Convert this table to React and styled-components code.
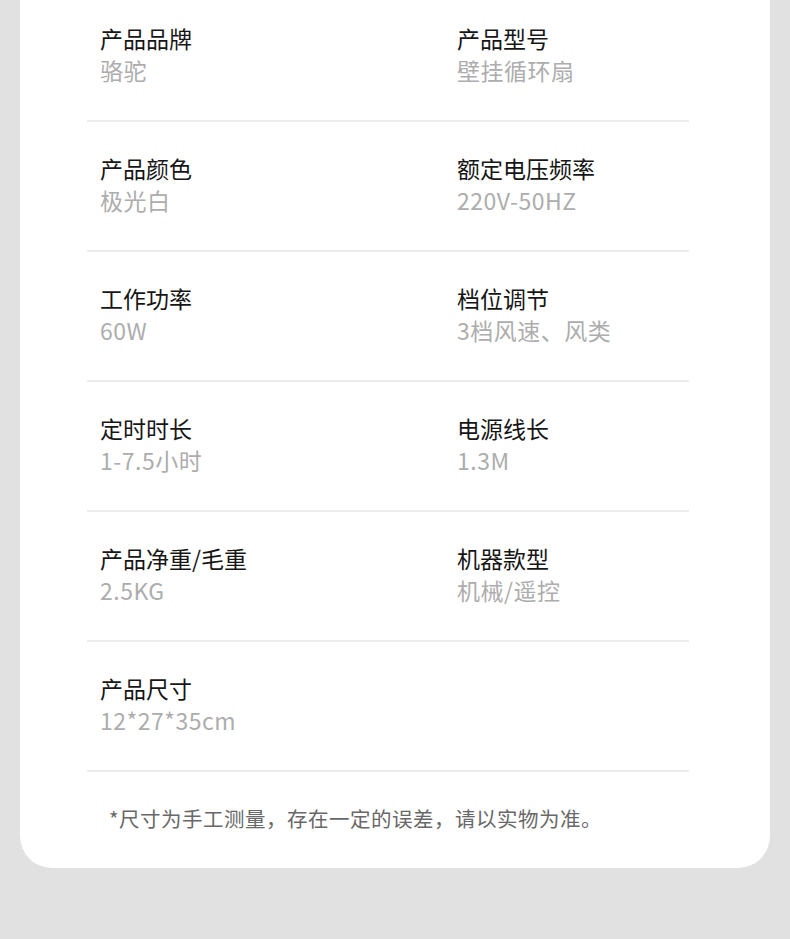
import React from "react";
import styled, { createGlobalStyle } from "styled-components";

const Global = createGlobalStyle`
  html, body { margin: 0; padding: 0; background: #e1e1e1; }
  body { font-family: "Noto Sans CJK SC", "Noto Sans", sans-serif; }
`;

const Page = styled.div`
  padding: 0 20px 71px;
`;

const Card = styled.div`
  background: #ffffff;
  border-radius: 0 0 32px 32px;
  padding: 0 81px 0 67px;
`;

const Row = styled.div`
  display: grid;
  grid-template-columns: 357px 1fr;
  padding: 30px 0 34px 13px;
  border-bottom: 2px solid #ececec;
  &:first-child { padding-top: 22px; }
`;

const Cell = styled.div`
  display: flex;
  flex-direction: column;
`;

const Label = styled.div`
  font-size: 23px;
  line-height: 32px;
  color: #161616;
`;

const Value = styled.div`
  font-size: 23px;
  line-height: 32px;
  color: #adadad;
  letter-spacing: 0.5px;
`;

const Note = styled.div`
  padding: 32px 0 36px 22px;
  font-size: 20.5px;
  line-height: 28px;
  letter-spacing: 0.5px;
  color: #686868;
`;

const rows = [
  [["产品品牌", "骆驼"], ["产品型号", "壁挂循环扇"]],
  [["产品颜色", "极光白"], ["额定电压频率", "220V-50HZ"]],
  [["工作功率", "60W"], ["档位调节", "3档风速、风类"]],
  [["定时时长", "1-7.5小时"], ["电源线长", "1.3M"]],
  [["产品净重/毛重", "2.5KG"], ["机器款型", "机械/遥控"]],
  [["产品尺寸", "12*27*35cm"]],
];

export default function App() {
  return (
    <>
      <Global />
      <Page>
        <Card>
          {rows.map((r, i) => (
            <Row key={i}>
              {r.map(([l, v]) => (
                <Cell key={l}>
                  <Label>{l}</Label>
                  <Value>{v}</Value>
                </Cell>
              ))}
            </Row>
          ))}
          <Note>*尺寸为手工测量，存在一定的误差，请以实物为准。</Note>
        </Card>
      </Page>
    </>
  );
}
